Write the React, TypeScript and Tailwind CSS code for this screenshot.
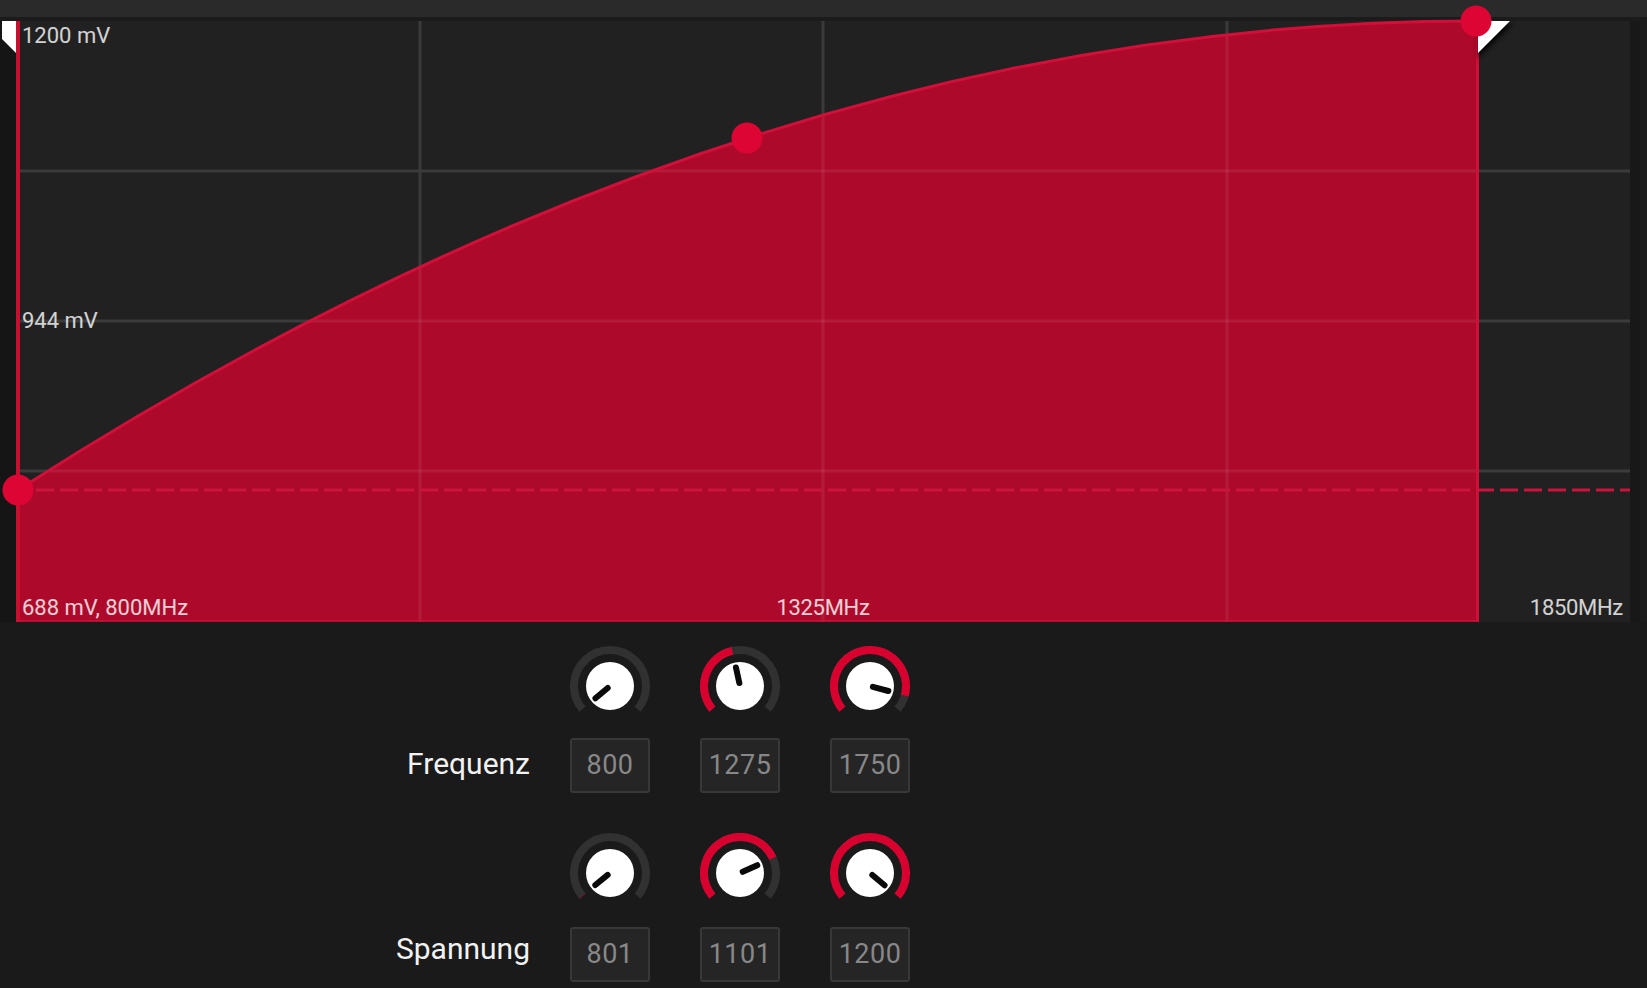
import React from "react";

// Voltage/frequency curve editor with knob controls

const CHART_W = 1614;
const CHART_H = 601;

const FILL_PATH = `M0 469 L2 469 Q731 0 1460 0 L1462 0 L1462 ${CHART_H} L0 ${CHART_H} Z`;
const CURVE_PATH = "M2 469 Q731 0 1460 0";

const V_LINES = [404, 807, 1211];
const H_LINES = [150, 300, 450];

function Grid({ stroke }: { stroke: string }) {
  return (
    <g stroke={stroke} strokeWidth={3}>
      {V_LINES.map((x) => (
        <line key={`v${x}`} x1={x} y1={0} x2={x} y2={CHART_H} />
      ))}
      {H_LINES.map((y) => (
        <line key={`h${y}`} x1={0} y1={y} x2={CHART_W} y2={y} />
      ))}
    </g>
  );
}

function Chart() {
  return (
    <div className="relative w-[1614px] h-[601px] bg-[#212121] shrink-0">
      <svg
        width={CHART_W}
        height={CHART_H}
        viewBox={`0 0 ${CHART_W} ${CHART_H}`}
        className="block overflow-visible"
      >
        <defs>
          <clipPath id="curveFill">
            <path d={FILL_PATH} />
          </clipPath>
          <filter id="handleShadow" x="-50%" y="-50%" width="200%" height="200%">
            <feGaussianBlur stdDeviation="2" />
          </filter>
        </defs>

        <Grid stroke="#3b3b3b" />
        <path d={FILL_PATH} fill="#ad0a2b" />
        <g clipPath="url(#curveFill)">
          <Grid stroke="rgba(255,255,255,0.07)" />
        </g>

        {/* curve edge and range borders */}
        <path d={CURVE_PATH} fill="none" stroke="#d20f38" strokeWidth={3} />
        <rect x={1460} y={0} width={3} height={CHART_H} fill="#d40d36" />
        <rect x={0} y={0} width={4} height={CHART_H} fill="#c8102e" />
        <rect x={0} y={CHART_H - 2} width={1462} height={1.5} fill="#c5113a" />

        {/* minimum voltage reference */}
        <line
          x1={20}
          y1={469}
          x2={CHART_W}
          y2={469}
          stroke="#cc133c"
          strokeWidth={3}
          strokeDasharray="18 6"
        />

        {/* range handles */}
        <polygon points="-14,0 0,0 0,32 -14,18" fill="#ffffff" />
        <polygon points="1462,3 1497,3 1462,38" fill="#000000" opacity={0.7} filter="url(#handleShadow)" />
        <polygon points="1462,0 1494,0 1462,32" fill="#ffffff" />

        {/* curve points */}
        <circle cx={2} cy={469} r={15.5} fill="#dc0533" />
        <circle cx={731} cy={117} r={15.5} fill="#dc0533" />
        <circle cx={1460} cy={0} r={15.5} fill="#dc0533" />
      </svg>

      <span className="absolute left-[6px] top-[4px] text-[22px] leading-none text-white/80">
        1200 mV
      </span>
      <span className="absolute left-[6px] top-[300px] -translate-y-1/2 text-[22px] leading-none text-white/80">
        944 mV
      </span>
      <span className="absolute left-[6px] top-[576px] text-[22px] leading-none text-white/80">
        688 mV, 800MHz
      </span>
      <span className="absolute left-[807px] top-[576px] -translate-x-1/2 text-[22px] leading-none tracking-[-0.3px] text-white/80">
        1325MHz
      </span>
      <span className="absolute right-[7px] top-[576px] text-[22px] leading-none tracking-[-0.3px] text-white/80">
        1850MHz
      </span>
    </div>
  );
}

function polar(c: number, r: number, deg: number): [number, number] {
  const a = (deg * Math.PI) / 180;
  return [c + r * Math.sin(a), c - r * Math.cos(a)];
}

function arcPath(c: number, r: number, a0: number, a1: number) {
  const [x0, y0] = polar(c, r, a0);
  const [x1, y1] = polar(c, r, a1);
  const large = a1 - a0 > 180 ? 1 : 0;
  return `M${x0.toFixed(2)} ${y0.toFixed(2)} A${r} ${r} 0 ${large} 1 ${x1.toFixed(2)} ${y1.toFixed(2)}`;
}

function Knob({ value, min, max }: { value: number; min: number; max: number }) {
  const frac = Math.min(1, Math.max(0, (value - min) / (max - min)));
  const start = -130;
  const end = 130;
  const angle = start + (end - start) * frac;
  const c = 40;
  const [px0, py0] = polar(c, 3, angle);
  const [px1, py1] = polar(c, 19, angle);
  return (
    <svg width={80} height={80} viewBox="0 0 80 80" className="block">
      <path d={arcPath(c, 36, start, end)} fill="none" stroke="#313131" strokeWidth={8} />
      {frac > 0 && (
        <path d={arcPath(c, 36, start, angle)} fill="none" stroke="#d7002f" strokeWidth={8} />
      )}
      <circle cx={c} cy={c} r={24} fill="#ffffff" />
      <line
        x1={px0}
        y1={py0}
        x2={px1}
        y2={py1}
        stroke="#0a0a0a"
        strokeWidth={6}
        strokeLinecap="round"
      />
    </svg>
  );
}

function ValueBox({ value }: { value: number }) {
  return (
    <div className="w-[80px] h-[55px] rounded-[3px] border-2 border-[#383838] bg-[#252525] flex items-center justify-center text-[27px] leading-none tracking-[0.5px] text-[#888888]">
      {value}
    </div>
  );
}

function ControlGroup({
  label,
  values,
  min,
  max,
  boxGap,
  labelShift,
}: {
  label: string;
  values: number[];
  min: number;
  max: number;
  boxGap: string;
  labelShift: string;
}) {
  return (
    <div className="flex flex-col">
      <div className="flex">
        <div className="w-[570px] shrink-0" />
        <div className="flex gap-[50px]">
          {values.map((v) => (
            <div key={v} className="w-[80px] flex justify-center">
              <Knob value={v} min={min} max={max} />
            </div>
          ))}
        </div>
      </div>
      <div className={`flex items-center ${boxGap}`}>
        <div
          className={`w-[530px] shrink-0 text-right text-[30px] leading-none text-[#f2f2f2] ${labelShift}`}
        >
          {label}
        </div>
        <div className="ml-[40px] flex gap-[50px]">
          {values.map((v) => (
            <ValueBox key={v} value={v} />
          ))}
        </div>
      </div>
    </div>
  );
}

export default function App() {
  return (
    <div className="w-[1647px] h-[988px] overflow-hidden bg-[#1a1a1a] font-[Roboto,'Noto_Sans',sans-serif]">
      <div className="h-[17px] bg-[#2a2a2a]" />
      <div className="h-[4px] bg-[#1b1b1b]" />
      <div className="flex">
        <div className="w-[16px] shrink-0 bg-[#151515]" />
        <Chart />
        <div className="flex-1 flex">
          <div className="w-[10px] bg-[#181818]" />
          <div className="flex-1 bg-[#1c1c1c]" />
        </div>
      </div>

      <div className="flex flex-col pt-[24px] gap-[40px]">
        <ControlGroup
          label="Frequenz"
          values={[800, 1275, 1750]}
          min={800}
          max={1850}
          boxGap="mt-[12px]"
          labelShift="-translate-y-[2px]"
        />
        <ControlGroup
          label="Spannung"
          values={[801, 1101, 1200]}
          min={800}
          max={1200}
          boxGap="mt-[14px]"
          labelShift="-translate-y-[6px]"
        />
      </div>
    </div>
  );
}
